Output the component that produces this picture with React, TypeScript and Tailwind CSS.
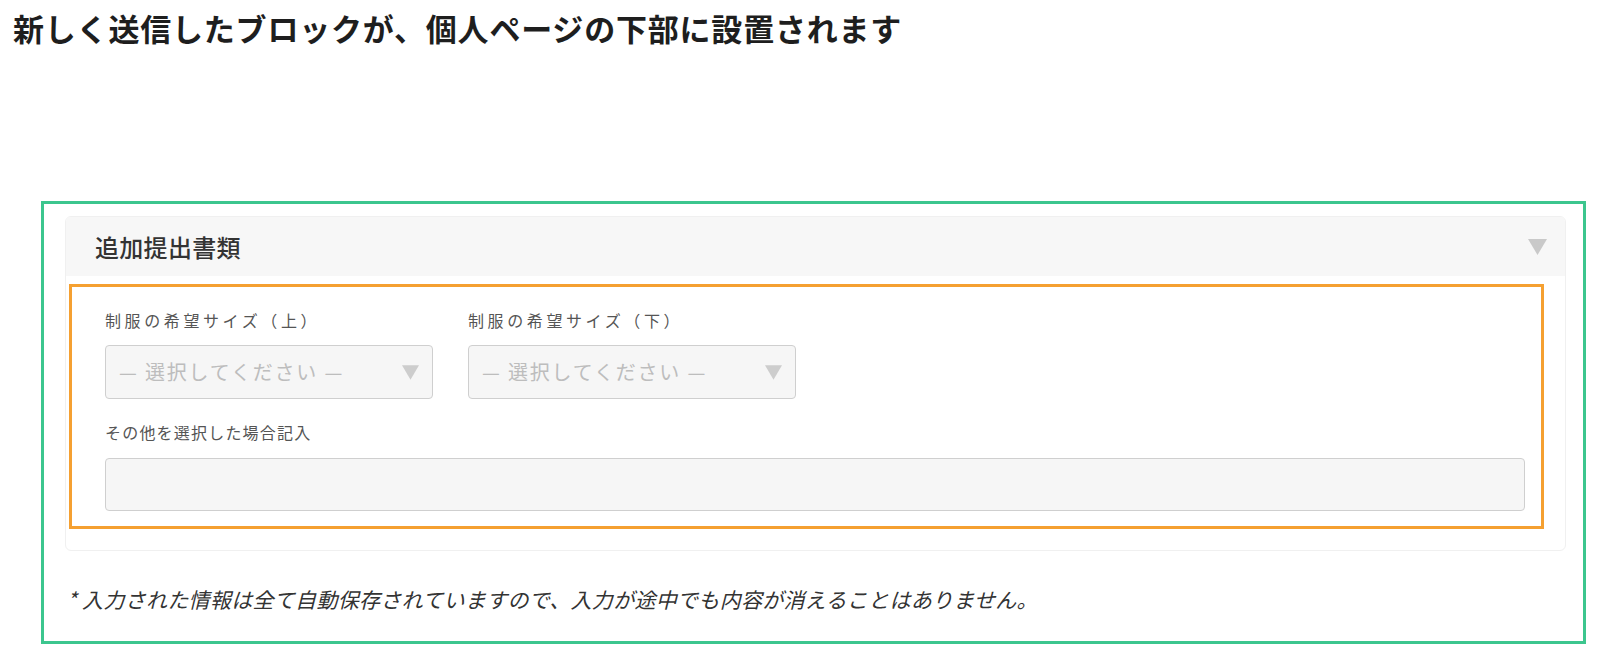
const jp = { fontFamily: '"Noto Sans CJK JP", "Noto Sans", sans-serif' }

function Caret({ className }: { className: string }) {
  return (
    <svg viewBox="0 0 19 16" className={className} aria-hidden>
      <path d="M0 0 H19 L9.5 16 Z" fill="currentColor" />
    </svg>
  )
}

function SizeSelect({ label }: { label: string }) {
  return (
    <div className="flex w-[328px] flex-col">
      <label className="text-[16px] leading-[20px] tracking-[3.6px] text-[#555]">{label}</label>
      <div className="mt-[15px] flex h-[54px] items-center justify-between rounded-[4px] border border-[#cfcfcf] bg-[#f6f6f6] pl-[13px] pr-[13px]">
        <span className="text-[20px] tracking-[1.8px] text-[#bdbdbd]">— 選択してください —</span>
        <Caret className="h-[15px] w-[17px] text-[#cdcdcd]" />
      </div>
    </div>
  )
}

export default function App() {
  return (
    <div className="h-[657px] w-[1600px] overflow-hidden bg-white" style={jp}>
      <h1 className="ml-[13px] mt-[6px] h-[44px] text-[31px] font-bold leading-[44px] tracking-[0.8px] text-[#1e1e1e]">
        新しく送信したブロックが、個人ページの下部に設置されます
      </h1>

      <div className="ml-[41px] mt-[151px] h-[443px] w-[1545px] border-[3px] border-[#3cc68e]">
        {/* accordion card */}
        <div className="ml-[21px] mt-[12px] w-[1501px] overflow-hidden rounded-[6px] border border-[#f0f0f0]">
          <div className="flex h-[59px] items-center justify-between bg-[#f7f7f7] pl-[29px] pr-[18px]">
            <span className="text-[24px] font-medium tracking-[0.3px] text-[#333]">追加提出書類</span>
            <Caret className="h-[16px] w-[19px] text-[#c9c9c9]" />
          </div>
          <div className="pb-[21px] pl-[3px] pr-[21px] pt-[8px]">
            <div className="border-[3px] border-[#f5a031] pb-[15px] pl-[33px] pr-[16px] pt-[23px]">
              <div className="flex gap-[35px]">
                <SizeSelect label="制服の希望サイズ（上）" />
                <SizeSelect label="制服の希望サイズ（下）" />
              </div>
              <label className="mt-[23px] block text-[16px] leading-[20px] tracking-[1.2px] text-[#555]">
                その他を選択した場合記入
              </label>
              <div className="mt-[16px] h-[53px] rounded-[4px] border border-[#cfcfcf] bg-[#f6f6f6]" />
            </div>
          </div>
        </div>

        <p className="ml-[23px] mt-[36px] text-[21px] italic leading-[24px] tracking-[0.3px] text-[#333]">
          * 入力された情報は全て自動保存されていますので、入力が途中でも内容が消えることはありません。
        </p>
      </div>
    </div>
  )
}
